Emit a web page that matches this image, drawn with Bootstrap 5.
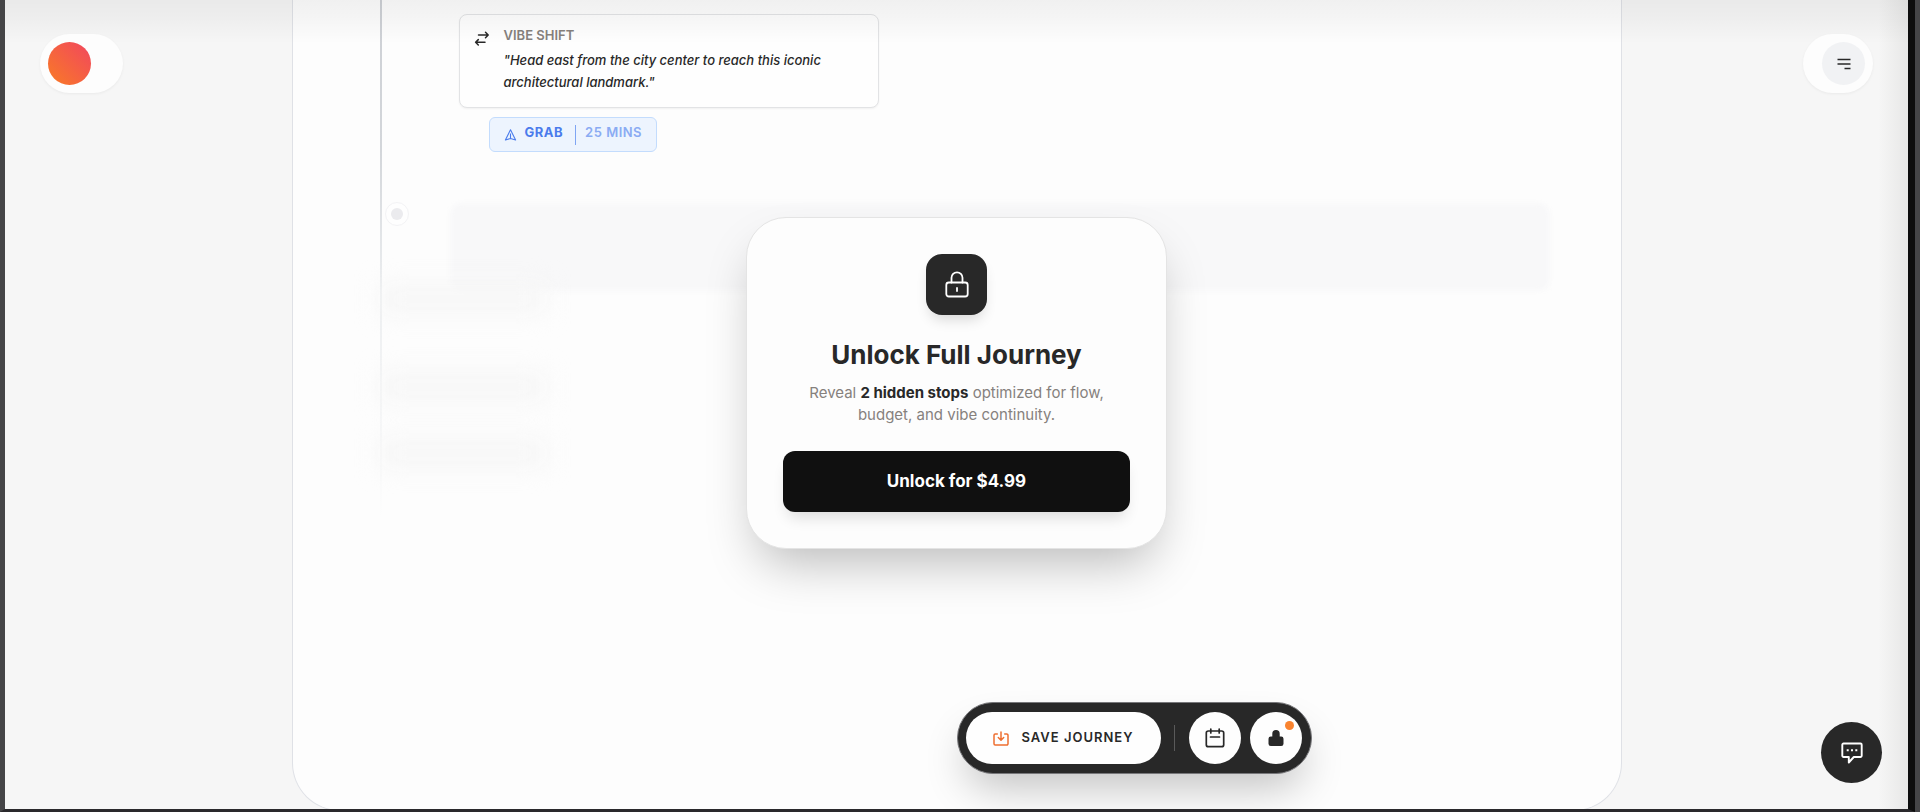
<!DOCTYPE html>
<html lang="en">
<head>
<meta charset="utf-8">
<meta name="viewport" content="width=device-width, initial-scale=1">
<title>Journey</title>
<link href="https://cdn.jsdelivr.net/npm/bootstrap@5.3.0/dist/css/bootstrap.min.css" rel="stylesheet">
<style>
:root{--ink:#282828;--muted-ink:#86817d;--hair:#dfe1e6}
body{font-family:Inter,"Liberation Sans",sans-serif;background:#454547;color:var(--ink);padding-right:5px}
button{border:0;padding:0}
svg{display:block;flex:none}
.stage{border:solid #0d0d0d;border-width:0 7px 3px 5px;border-left-color:#454547;border-bottom-color:#2a292c;background:#f6f6f6}
.shade{inset:0;pointer-events:none;z-index:1;background:linear-gradient(rgba(0,0,0,.05),rgba(0,0,0,.03) 20px,transparent 44px),linear-gradient(270deg,rgba(60,60,50,.08),transparent 30px)}
.sheet{width:70%;max-width:1330px;height:calc(100% + 2px);background:#fdfdfd;border:1px solid var(--hair);border-top:0;border-radius:0 0 48px 48px;padding:14px 71px 0 87px}
.rail{left:87px;top:0;width:2px;height:520px;background:linear-gradient(#cdd0d5,#d3d6da 150px,#eceef0 290px,transparent)}
.stops{padding-left:79px}
.shift{width:420px;max-width:100%;min-height:94px;border:1px solid #e2e3e5;border-radius:8px;padding:10px 14px 0;gap:14px;background:#fefefe;box-shadow:0 1px 2px rgba(0,0,0,.05)}
.eyebrow{font-size:13px;line-height:20px;font-weight:600;color:var(--muted-ink)}
.quote{font-size:13px;line-height:22px;font-style:italic;font-weight:500;padding-top:4px}
.ride{margin:9px 0 0 30px;height:35px;padding:0 14px;gap:8px;border:1px solid #c3dcfd;border-radius:6px;background:#edf4fe;color:#4a7bec;font-size:13px;line-height:15px;font-weight:700}
.ride span{padding-bottom:5px;letter-spacing:.5px}
.ride-time{border-left:1px solid #7fa5f3;color:#8aabf3;padding-left:9px;margin-left:4px;font-weight:600}
.veiled{margin-top:50px;padding-left:5px;gap:41px}
.node{width:24px;height:24px;border:1px solid #f3f3f5;background:#fefefe;flex:none}
.node i{width:12px;height:12px;background:#ebebee}
.veil{height:88px;margin-top:1px;border-radius:12px;background:#f8f8f9;filter:blur(2px)}
.smudges{gap:48px;margin-top:-6px}
.smudge{width:165px;height:28px;background:#f6f6f6;filter:blur(12px)}
.smudge + .smudge{margin-top:12px}
.smudge:last-child{margin-top:-10px}
.pill{height:59px;padding:8px;background:#fdfdfd;box-shadow:0 1px 3px rgba(0,0,0,.05)}
.topbar{left:35px;right:35px;top:34px;z-index:3}
.brand{width:83px}
.menu-pill{width:70px}
.orb{width:43px;height:43px}
.brand .orb{background:linear-gradient(45deg,#f97b25,#f1465f)}
.menu-pill .orb{background:#f1f2f4;color:var(--ink)}
.modal-layer{inset:0;padding-top:217px;z-index:2}
.unlock{width:421px;height:332px;padding:36px;border:1px solid #e4e4e4;border-radius:40px;background:#fdfdfd;box-shadow:0 25px 50px -12px rgba(0,0,0,.27)}
.lock-tile{width:61px;height:61px;border-radius:16px;background:var(--ink);color:#fff;box-shadow:0 8px 14px -4px rgba(0,0,0,.16)}
.unlock h1{font-size:26px;line-height:34px;font-weight:700;margin:23px 0 10px}
.unlock p{font-size:15px;line-height:22px;color:var(--muted-ink);margin:0 -4px 25px}
.unlock p strong{color:var(--ink);font-weight:700}
.buy{height:61px;border-radius:12px;background:#101010;color:#fff;font-size:17px;font-weight:700;box-shadow:0 10px 15px -5px rgba(0,0,0,.14)}
.dock{left:50%;bottom:35px;height:72px;padding:0 9px 0 8px;background:var(--ink);border:1px solid #77777a;z-index:3;box-shadow:0 22px 42px -8px rgba(0,0,0,.23)}
.dock button{height:52px;background:#fefefe;color:var(--ink)}
.dock .save{width:195px;gap:13px}
.dock .save span{font-size:13px;font-weight:600;letter-spacing:1px;padding-bottom:1px}
.dock .tool{width:52px}
.dock .tool + .tool{margin-left:9px}
.sep{width:1px;height:26px;background:#5a5a5a;margin:0 14px 0 13px}
.ping{width:9px;height:9px;top:9px;right:8px;background:#f9832f}
.chat{width:61px;height:61px;right:26px;bottom:26px;background:var(--ink);color:#fff;z-index:3}
</style>
</head>
<body class="vh-100 overflow-hidden">
<div class="stage position-relative h-100 overflow-hidden">
  <div class="shade position-absolute"></div>
  <header class="topbar position-absolute d-flex justify-content-between">
    <a href="#" class="pill brand rounded-pill" aria-label="Home"><span class="orb rounded-circle d-block"></span></a>
    <div class="pill menu-pill rounded-pill d-flex justify-content-end">
      <button type="button" class="orb rounded-circle d-flex align-items-center justify-content-center" aria-label="Menu">
        <svg width="14" height="12" viewBox="0 0 14 12" fill="none" stroke="currentColor" stroke-width="1.4"><path d="M.5 1.5h13M.5 6h13M7.500 10.500h6"/></svg>
      </button>
    </div>
  </header>

  <main class="sheet position-relative mx-auto">
    <div class="rail position-absolute"></div>
    <section class="stops">
      <article class="shift d-flex">
        <svg class="mt-1" width="16" height="18" viewBox="0 0 16 18" fill="none" stroke="currentColor" stroke-width="1.500" stroke-linecap="round" stroke-linejoin="round"><path d="M4.500 6h9.500M11.500 3.300 14.200 6l-2.700 2.700M11 13.300H1.700M4.300 10.600 1.600 13.300l2.700 2.700"/></svg>
        <div>
          <div class="eyebrow">VIBE SHIFT</div>
          <div class="quote">"Head east from the city center to reach this iconic architectural landmark."</div>
        </div>
      </article>
      <div class="ride d-inline-flex align-items-center">
        <svg width="13" height="13" viewBox="0 0 13 13" fill="none" stroke="currentColor" stroke-width="1.100" stroke-linejoin="round"><path d="M6.500 1.800 1.400 12l5.100-1.600 5.100 1.600ZM6.500 5.500v5"/></svg>
        <span>GRAB</span><span class="ride-time">25 MINS</span>
      </div>
    </section>
    <section class="veiled d-flex" aria-hidden="true">
      <span class="node rounded-circle d-flex align-items-center justify-content-center"><i class="rounded-circle"></i></span>
      <div class="veil flex-grow-1"></div>
    </section>
    <div class="smudges d-flex flex-column" aria-hidden="true">
      <div class="smudge"></div><div class="smudge"></div><div class="smudge"></div>
    </div>
  </main>

  <div class="modal-layer position-absolute d-flex justify-content-center align-items-start">
    <section class="unlock text-center" role="dialog" aria-labelledby="unlock-title">
      <div class="lock-tile mx-auto d-flex align-items-center justify-content-center">
        <svg width="24" height="27" viewBox="0 0 24 27" fill="none" stroke="currentColor" stroke-width="1.800" stroke-linecap="round"><rect x="1.300" y="11.500" width="21.400" height="14" rx="2.500"/><path d="M6.500 11.500V6.800a5.500 5.500 0 0 1 11 0v4.700M12 17v3"/></svg>
      </div>
      <h1 id="unlock-title">Unlock Full Journey</h1>
      <p>Reveal <strong>2 hidden stops</strong> optimized for flow,<br>budget, and vibe continuity.</p>
      <button type="button" class="buy w-100">Unlock for $4.99</button>
    </section>
  </div>

  <nav class="dock position-absolute rounded-pill d-flex align-items-center" aria-label="Journey actions">
    <button type="button" class="save rounded-pill d-flex align-items-center justify-content-center">
      <svg width="16" height="15" viewBox="0 0 16 15" fill="none" stroke="#ee6f31" stroke-width="1.500" stroke-linecap="round" stroke-linejoin="round"><path d="M4.300 3H2.200A1.200 1.200 0 0 0 1 4.200v8.600A1.200 1.200 0 0 0 2.200 14h11.600a1.200 1.200 0 0 0 1.200-1.200V4.200A1.200 1.200 0 0 0 13.800 3h-2.100M8 1v8M5.300 6.500 8 9.200l2.700-2.700"/></svg>
      <span>SAVE JOURNEY</span>
    </button>
    <span class="sep"></span>
    <button type="button" class="tool rounded-circle d-flex align-items-center justify-content-center" aria-label="Calendar">
      <svg width="20" height="20" viewBox="0 0 20 20" fill="none" stroke="currentColor" stroke-width="1.700" stroke-linecap="round"><rect x="1.300" y="3" width="17.400" height="15.700" rx="2"/><path d="M5.800 1v4M14.200 1v4M5.500 9h9"/></svg>
    </button>
    <button type="button" class="tool rounded-circle position-relative d-flex align-items-center justify-content-center" aria-label="Locked stops">
      <svg width="16" height="18" viewBox="0 0 16 18" fill="currentColor"><path d="M4.300 7.500V4.700a3.700 3.700 0 0 1 7.400 0v2.800h1.500a2.300 2.300 0 0 1 2.300 2.300v4.900a2.300 2.300 0 0 1-2.300 2.300H2.800a2.300 2.300 0 0 1-2.300-2.300V9.800a2.300 2.300 0 0 1 2.300-2.300Z"/></svg>
      <span class="ping position-absolute rounded-circle"></span>
    </button>
  </nav>

  <button type="button" class="chat position-absolute rounded-circle d-flex align-items-center justify-content-center" aria-label="Chat">
    <svg width="22" height="22" viewBox="0 0 22 22" fill="none" stroke="currentColor" stroke-width="1.900" stroke-linejoin="round"><path d="M2.500 1.500h17a1.200 1.200 0 0 1 1.200 1.200v11.100a1.200 1.200 0 0 1-1.200 1.200h-6.700l-5 5.500V15H2.500a1.200 1.200 0 0 1-1.200-1.200V2.700a1.200 1.200 0 0 1 1.200-1.200Z"/><path d="M5.700 8.300h2M10 8.300h2M14.300 8.300h2"/></svg>
  </button>
</div>
<script src="https://cdn.jsdelivr.net/npm/bootstrap@5.3.0/dist/js/bootstrap.bundle.min.js"></script>
</body>
</html>
